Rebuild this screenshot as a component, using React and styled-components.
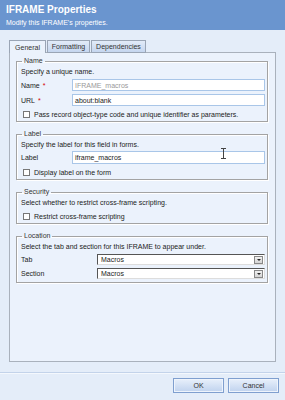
import styled, { createGlobalStyle } from "styled-components";

const GlobalStyle = createGlobalStyle`
  html, body {
    margin: 0;
    padding: 0;
    background: #e3ecf8;
  }
  * { box-sizing: border-box; }
`;

const Dialog = styled.div`
  position: relative;
  width: 285px;
  height: 400px;
  background: #e4edf9;
  font-family: Tahoma, "Liberation Sans", sans-serif;
  font-size: 7px;
  color: #222;
  display: flex;
  flex-direction: column;
  overflow: hidden;
`;

const Header = styled.div`
  height: 30px;
  background: #6a95cf;
  color: #fff;
  padding: 4px 6px 0;
`;

const Title = styled.div`
  font-family: "Liberation Sans", sans-serif;
  font-weight: bold;
  font-size: 10px;
  line-height: 12px;
`;

const Subtitle = styled.div`
  font-size: 7px;
  line-height: 10px;
  margin-top: 2px;
`;

const Body = styled.div`
  padding: 10px 9px 0;
`;

const Tabs = styled.div`
  display: flex;
  gap: 1px;
  height: 13px;
`;

const Tab = styled.div`
  height: 13px;
  width: ${(p) => p.$w}px;
  border: 1px solid #9aa5b5;
  border-bottom: ${(p) => (p.$active ? "none" : "1px solid #9aa5b5")};
  background: ${(p) =>
    p.$active ? "#ebf2fc" : "linear-gradient(#e2ebf8, #c5d6ef)"};
  display: flex;
  align-items: center;
  justify-content: center;
  line-height: 11px;
  color: #333;
  position: relative;
  z-index: 1;
`;

const Panel = styled.div`
  height: 310px;
  width: 267px;
  border: 1px solid #a9b1bc;
  background: #ebf2fc;
  padding: 4px 7px 0 6px;
  margin-top: -1px;
`;

const Group = styled.fieldset`
  margin: 0 0 8px;
  padding: 2px 2px ${(p) => p.$pb ?? 1}px 4px;
  border: 1px solid #a3a3a3;
  box-shadow: inset 1px 1px 0 #fff, 1px 1px 0 #fff;
  min-width: 0;
`;

const Legend = styled.legend`
  padding: 0 2px;
  margin-left: 1px;
  line-height: 8px;
  font-size: 7px;
  color: #333;
`;

const Desc = styled.div`
  line-height: 10px;
  white-space: nowrap;
`;

const Row = styled.div`
  display: flex;
  align-items: center;
  height: ${(p) => p.$h || 12}px;
  margin-top: ${(p) => p.$mt || 0}px;
  white-space: nowrap;
`;

const FieldLabel = styled.div`
  width: ${(p) => p.$w || 51}px;
  flex-shrink: 0;
`;

const Required = styled.span`
  color: #d40000;
  margin-left: 3px;
`;

const TextBox = styled.div`
  flex: 1;
  height: 100%;
  background: #fff;
  border: 1px solid #a9c6e8;
  padding-left: 2px;
  display: flex;
  align-items: center;
  color: ${(p) => (p.$disabled ? "#999" : "#222")};
`;

const SelectBox = styled.div`
  flex: 1;
  height: 100%;
  background: #fff;
  border: 1px solid;
  border-color: #555 #ddd #ddd #555;
  padding-left: 3px;
  display: flex;
  align-items: center;
  justify-content: space-between;
`;

const DropButton = styled.div`
  width: 9px;
  height: 8px;
  margin-right: 1px;
  background: linear-gradient(#f1f1f1, #d4d4d4);
  border: 1px solid #888;
  display: flex;
  align-items: center;
  justify-content: center;

  &::after {
    content: "";
    border-left: 2px solid transparent;
    border-right: 2px solid transparent;
    border-top: 2px solid #222;
  }
`;

const Check = styled.span`
  width: 7px;
  height: 7px;
  border: 1px solid #777;
  background: #fff;
  margin: 0 4px 0 2px;
  flex-shrink: 0;
`;

const Footer = styled.div`
  margin-top: 10px;
  border-top: 1px solid #c3d3ea;
  box-shadow: 0 1px 0 #f4f8fd inset;
  display: flex;
  justify-content: flex-end;
  gap: 4px;
  padding: 5px 6px 0 0;
`;

const Button = styled.button`
  width: 51px;
  height: 15px;
  border: 1px solid #7f9fcf;
  background: linear-gradient(#e8f0fb, #bfd2ee);
  font-family: inherit;
  font-size: 7px;
  color: #333;
  padding: 0;
  box-shadow: inset 0 0 0 1px #eef4fc;
`;

const Cursor = styled.svg`
  position: absolute;
  left: 221px;
  top: 148px;
`;

const Checkbox = ({ children }) => (
  <Row $mt={2}>
    <Check />
    {children}
  </Row>
);

export default function App() {
  return (
    <Dialog>
      <GlobalStyle />
      <Header>
        <Title>IFRAME Properties</Title>
        <Subtitle>Modify this IFRAME's properties.</Subtitle>
      </Header>
      <Body>
        <Tabs>
          <Tab $w={37} $active>General</Tab>
          <Tab $w={43}>Formatting</Tab>
          <Tab $w={55}>Dependencies</Tab>
        </Tabs>
        <Panel>
          <Group>
            <Legend>Name</Legend>
            <Desc>Specify a unique name.</Desc>
            <Row $mt={2}>
              <FieldLabel>
                Name<Required>*</Required>
              </FieldLabel>
              <TextBox $disabled>IFRAME_macros</TextBox>
            </Row>
            <Row $mt={3}>
              <FieldLabel>
                URL<Required>*</Required>
              </FieldLabel>
              <TextBox>about:blank</TextBox>
            </Row>
            <Checkbox>
              Pass record object-type code and unique identifier as parameters.
            </Checkbox>
          </Group>
          <Group>
            <Legend>Label</Legend>
            <Desc>Specify the label for this field in forms.</Desc>
            <Row $mt={1} $h={13}>
              <FieldLabel>Label</FieldLabel>
              <TextBox>iframe_macros</TextBox>
            </Row>
            <Checkbox>Display label on the form</Checkbox>
          </Group>
          <Group>
            <Legend>Security</Legend>
            <Desc>Select whether to restrict cross-frame scripting.</Desc>
            <Checkbox>Restrict cross-frame scripting</Checkbox>
          </Group>
          <Group $pb={3}>
            <Legend>Location</Legend>
            <Desc>
              Select the tab and section for this IFRAME to appear under.
            </Desc>
            <Row $mt={2} $h={11}>
              <FieldLabel $w={76}>Tab</FieldLabel>
              <SelectBox>
                Macros
                <DropButton />
              </SelectBox>
            </Row>
            <Row $mt={3} $h={11}>
              <FieldLabel $w={76}>Section</FieldLabel>
              <SelectBox>
                Macros
                <DropButton />
              </SelectBox>
            </Row>
          </Group>
        </Panel>
      </Body>
      <Footer>
        <Button>OK</Button>
        <Button>Cancel</Button>
      </Footer>
      <Cursor width="5" height="11" viewBox="0 0 5 11">
        <path
          d="M0 0.5h5M0 10.5h5M2.5 0.5v10"
          stroke="#444"
          strokeWidth="1"
          fill="none"
        />
      </Cursor>
    </Dialog>
  );
}
